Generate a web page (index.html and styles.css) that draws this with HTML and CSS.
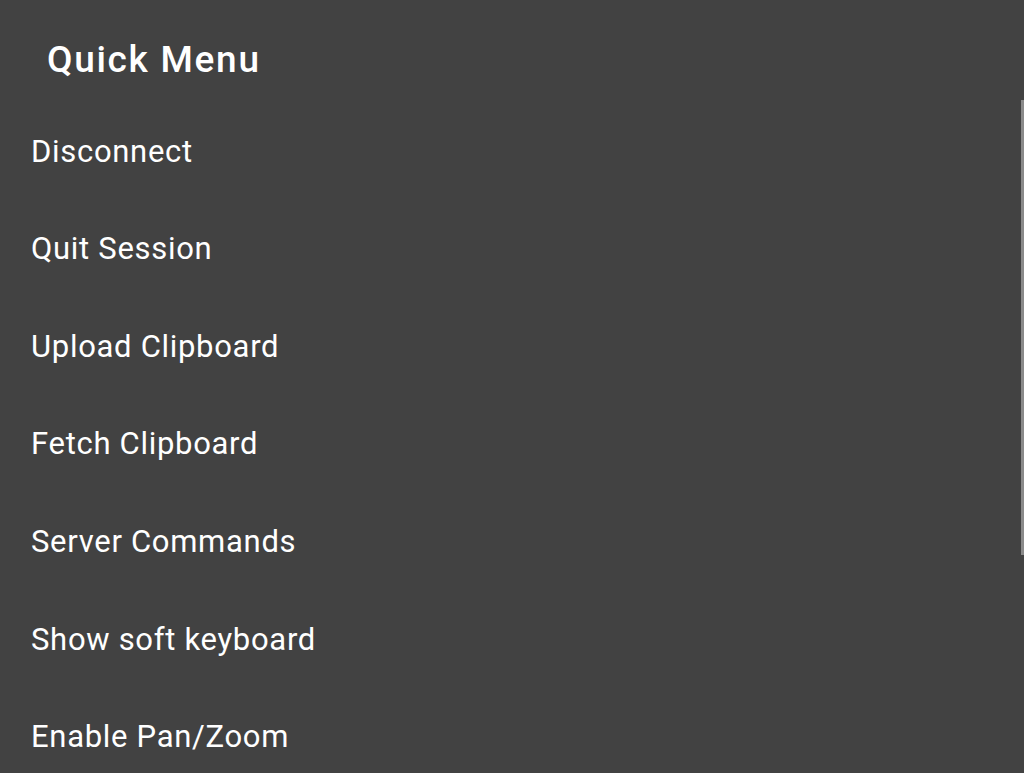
FILE: index.html
```html
<!DOCTYPE html>
<html lang="en">
<head>
<meta charset="utf-8">
<title>Quick Menu</title>
<link rel="stylesheet" href="styles.css">
</head>
<body>
<div class="dialog">
  <h1 class="title">Quick Menu</h1>
  <ul class="menu">
    <li class="item">Disconnect</li>
    <li class="item">Quit Session</li>
    <li class="item">Upload Clipboard</li>
    <li class="item">Fetch Clipboard</li>
    <li class="item">Server Commands</li>
    <li class="item">Show soft keyboard</li>
    <li class="item">Enable Pan/Zoom</li>
  </ul>
  <div class="scrollbar"></div>
</div>
</body>
</html>
```
FILE: styles.css
```css
html, body {
  margin: 0;
  padding: 0;
  background: #424242;
  height: 100%;
  overflow: hidden;
}
.dialog {
  position: relative;
  width: 1024px;
  height: 773px;
  font-family: Roboto, "Noto Sans", sans-serif;
  color: #ffffff;
}
.title {
  margin: 0;
  padding: 37.5px 0 0 47px;
  height: 65px;
  box-sizing: content-box;
  font-size: 37px;
  font-weight: 500;
  letter-spacing: 1.7px;
  line-height: normal;
}
.menu {
  list-style: none;
  margin: 0;
  padding: 0;
}
.item {
  height: 97.67px;
  line-height: 97.67px;
  padding-left: 31px;
  font-size: 31px;
  font-weight: 400;
  letter-spacing: 0.7px;
  white-space: nowrap;
}
.scrollbar {
  position: absolute;
  right: 0;
  top: 100px;
  width: 3px;
  height: 455px;
  background: #8a8a8a;
}
```
